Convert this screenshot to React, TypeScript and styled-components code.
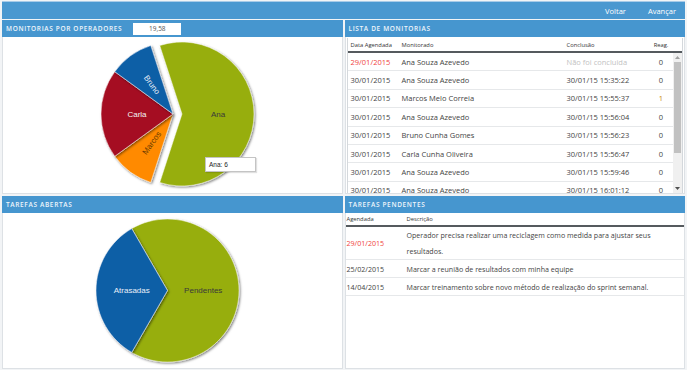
import React from "react";
import styled, { createGlobalStyle } from "styled-components";

const GlobalStyle = createGlobalStyle`
  html, body {
    margin: 0;
    padding: 0;
    background: #f2f4f6;
  }
  * {
    box-sizing: border-box;
  }
`;

const monitorias = [
  { agendada: "29/01/2015", late: true, nome: "Ana Souza Azevedo", conclusao: "Não foi concluida", pending: true, reag: 0 },
  { agendada: "30/01/2015", nome: "Ana Souza Azevedo", conclusao: "30/01/15 15:35:22", reag: 0 },
  { agendada: "30/01/2015", nome: "Marcos Melo Correia", conclusao: "30/01/15 15:55:37", reag: 1 },
  { agendada: "30/01/2015", nome: "Ana Souza Azevedo", conclusao: "30/01/15 15:56:04", reag: 0 },
  { agendada: "30/01/2015", nome: "Bruno Cunha Gomes", conclusao: "30/01/15 15:56:23", reag: 0 },
  { agendada: "30/01/2015", nome: "Carla Cunha Oliveira", conclusao: "30/01/15 15:56:47", reag: 0 },
  { agendada: "30/01/2015", nome: "Ana Souza Azevedo", conclusao: "30/01/15 15:59:46", reag: 0 },
  { agendada: "30/01/2015", nome: "Ana Souza Azevedo", conclusao: "30/01/15 16:01:12", reag: 0 },
];

const tarefas = [
  { agendada: "29/01/2015", late: true, descricao: "Operador precisa realizar uma reciclagem como medida para ajustar seus resultados." },
  { agendada: "25/02/2015", descricao: "Marcar a reunião de resultados com minha equipe" },
  { agendada: "14/04/2015", descricao: "Marcar treinamento sobre novo método de realização do sprint semanal." },
];

type Slice = {
  name: string;
  value: number;
  color: string;
  label: string;
  exploded?: boolean;
};

const operadores: Slice[] = [
  { name: "Ana", value: 6, color: "#97ae0b", label: "#3a3a3a", exploded: true },
  { name: "Marcos", value: 1, color: "#ff8a00", label: "#6a3a00" },
  { name: "Carla", value: 2, color: "#a50f22", label: "#f4f4f4" },
  { name: "Bruno", value: 1, color: "#115ea6", label: "#e8eef8" },
];

const abertas: Slice[] = [
  { name: "Pendentes", value: 2, color: "#97ae0b", label: "#3a3a3a" },
  { name: "Atrasadas", value: 1, color: "#115ea6", label: "#e8eef8" },
];

const Page = styled.div`
  width: 687px;
  height: 370px;
  padding: 1px 2px 0 2px;
  font-family: "Open Sans", "Liberation Sans", sans-serif;
  color: #444;
`;

const TopBar = styled.div`
  height: 18px;
  background: #4a98d0;
  border-top: 1px solid #a8cbe8;
  display: flex;
  justify-content: flex-end;
  align-items: center;
  gap: 22px;
  padding-right: 9px;
`;

const NavLink = styled.span`
  color: #fff;
  font-size: 7.5px;
`;

const Grid = styled.div`
  margin-top: 1px;
  display: grid;
  grid-template-columns: 1fr 1fr;
  grid-template-rows: 174px 173px;
  gap: 2px;
`;

const Panel = styled.div`
  display: flex;
  flex-direction: column;
  min-height: 0;
`;

const PanelHeader = styled.div`
  height: 17px;
  flex: none;
  background: #4696cf;
  display: flex;
  align-items: center;
  padding-left: 4px;
`;

const PanelTitle = styled.span`
  color: #eef5fb;
  font-size: 6.5px;
  font-weight: 600;
  letter-spacing: 0.65px;
  text-transform: uppercase;
`;

const ValueBox = styled.span`
  margin-left: 11px;
  width: 48px;
  height: 12px;
  background: #fff;
  color: #555;
  font-size: 6.5px;
  display: flex;
  align-items: center;
  justify-content: center;
`;

const PanelBody = styled.div<{ $pad?: boolean }>`
  flex: 1;
  min-height: 0;
  position: relative;
  background: #fff;
  border: 1px solid #dde1e5;
  border-top: none;
  padding: ${(p) => (p.$pad ? "1px 1px 0 1px" : "0")};
  display: flex;
  flex-direction: column;
`;

const ChartSvg = styled.svg`
  display: block;
  width: 100%;
  height: 100%;
`;

const Tooltip = styled.div`
  position: absolute;
  left: 202px;
  top: 120px;
  width: 51px;
  height: 15px;
  background: #fff;
  border: 1px solid #c4c4c4;
  box-shadow: 1px 1px 1px rgba(0, 0, 0, 0.12);
  font-family: "Liberation Sans", Arial, sans-serif;
  font-size: 6.5px;
  color: #222;
  display: flex;
  align-items: center;
  padding-left: 3px;
`;

const Table = styled.div`
  flex: 1;
  min-height: 0;
  display: flex;
  flex-direction: column;
  border-left: 1px solid #d4d8dc;
  border-right: 1px solid #d4d8dc;
`;

const HeadRow = styled.div<{ $cols: string; $padRight: number }>`
  display: grid;
  grid-template-columns: ${(p) => p.$cols};
  height: 15px;
  align-items: center;
  padding: 0 ${(p) => p.$padRight}px 0 3px;
  border-bottom: 2px solid #555a5e;
  font-size: 5.8px;
  color: #333;
  flex: none;
`;

const HeadCell = styled.span<{ $center?: boolean }>`
  text-align: ${(p) => (p.$center ? "center" : "left")};
`;

const ScrollArea = styled.div`
  flex: 1;
  min-height: 0;
  display: flex;
`;

const Rows = styled.div`
  flex: 1;
  overflow: hidden;
`;

const Row = styled.div<{ $cols: string }>`
  display: grid;
  grid-template-columns: ${(p) => p.$cols};
  height: 18.4px;
  align-items: center;
  padding: 0 2px 0 3px;
  border-bottom: 1px solid #e6e8ea;
  font-size: 7.5px;
  color: #444;
`;

const Cell = styled.span<{ $tone?: "late" | "muted" | "warn"; $center?: boolean }>`
  white-space: nowrap;
  text-align: ${(p) => (p.$center ? "center" : "left")};
  color: ${(p) =>
    p.$tone === "late" ? "#f0433c" : p.$tone === "muted" ? "#c2c2c2" : p.$tone === "warn" ? "#c8870e" : "#444"};
`;

const ScrollBar = styled.div`
  width: 9px;
  flex: none;
  background: #f0f0f0;
  display: flex;
  flex-direction: column;
`;

const ScrollButton = styled.div`
  height: 9px;
  display: flex;
  align-items: center;
  justify-content: center;
`;

const ScrollTrack = styled.div`
  flex: 1;
  padding: 0 1px;
`;

const ScrollThumb = styled.div`
  height: 91px;
  background: #c1c1c1;
`;

const TaskRow = styled.div`
  display: grid;
  grid-template-columns: 60px 1fr;
  align-items: center;
  padding: 0 4px 0 1px;
  border-bottom: 1px solid #e6e8ea;
  font-size: 7.1px;
  line-height: 16px;
  min-height: 18px;
  color: #444;
`;

const TaskHead = styled.div`
  display: grid;
  grid-template-columns: 60px 1fr;
  height: 14px;
  align-items: center;
  padding-left: 1px;
  border-bottom: 2px solid #555a5e;
  font-size: 5.8px;
  color: #333;
`;

const point = (cx: number, cy: number, r: number, a: number) => {
  const rad = (a * Math.PI) / 180;
  return [cx + r * Math.sin(rad), cy - r * Math.cos(rad)];
};

const slicePath = (cx: number, cy: number, r: number, a0: number, a1: number) => {
  const [x0, y0] = point(cx, cy, r, a0);
  const [x1, y1] = point(cx, cy, r, a1);
  const large = a1 - a0 > 180 ? 1 : 0;
  return `M${cx} ${cy} L${x0} ${y0} A${r} ${r} 0 ${large} 1 ${x1} ${y1} Z`;
};

const PieChart = ({
  id,
  slices,
  cx,
  cy,
  r,
  start,
  rotateLabels,
}: {
  id: string;
  slices: Slice[];
  cx: number;
  cy: number;
  r: number;
  start: number;
  rotateLabels?: boolean;
}) => {
  const total = slices.reduce((s, x) => s + x.value, 0);
  let angle = start;
  const parts = slices.map((s) => {
    const a0 = angle;
    const a1 = angle + (s.value / total) * 360;
    angle = a1;
    const mid = (a0 + a1) / 2;
    const [ox, oy] = s.exploded ? point(0, 0, 9, mid) : [0, 0];
    return { ...s, a0, a1, mid, ox, oy };
  });

  return (
    <ChartSvg>
      <defs>
        <filter id={id} x="-10%" y="-10%" width="125%" height="125%">
          <feDropShadow dx="1.2" dy="1.2" stdDeviation="0.9" floodColor="#000" floodOpacity="0.5" />
        </filter>
      </defs>
      {parts.map((p) => (
        <path
          key={p.name}
          d={slicePath(cx + p.ox, cy + p.oy, r, p.a0, p.a1)}
          fill={p.color}
          stroke="#fff"
          strokeWidth={0.5}
          filter={`url(#${id})`}
        />
      ))}
      {parts.map((p) => {
        const [lx, ly] = point(cx + p.ox, cy + p.oy, r / 2, p.mid);
        // labels on the left half read along the radius, towards the centre
        const rot = rotateLabels && p.mid > 180 ? p.mid - 270 : 0;
        return (
          <text
            key={p.name}
            x={lx}
            y={ly}
            fill={p.label}
            fontFamily="'Liberation Sans', Arial, sans-serif"
            fontSize={8}
            textAnchor="middle"
            dominantBaseline="central"
            transform={rot ? `rotate(${rot} ${lx} ${ly})` : undefined}
          >
            {p.name}
          </text>
        );
      })}
    </ChartSvg>
  );
};

const monitoriaCols = "51px 165px 1fr 20px";

const App = () => {
  return (
    <Page>
      <GlobalStyle />
      <TopBar>
        <NavLink>Voltar</NavLink>
        <NavLink>Avançar</NavLink>
      </TopBar>

      <Grid>
        <Panel>
          <PanelHeader>
            <PanelTitle>Monitorias por operadores</PanelTitle>
            <ValueBox>19,58</ValueBox>
          </PanelHeader>
          <PanelBody>
            <PieChart id="shadow-op" slices={operadores} cx={170} cy={77} r={72} start={-18} rotateLabels />
            <Tooltip>Ana: 6</Tooltip>
          </PanelBody>
        </Panel>

        <Panel>
          <PanelHeader>
            <PanelTitle>Lista de monitorias</PanelTitle>
          </PanelHeader>
          <PanelBody $pad>
            <Table>
              <HeadRow $cols={monitoriaCols} $padRight={11}>
                <HeadCell>Data Agendada</HeadCell>
                <HeadCell>Monitorado</HeadCell>
                <HeadCell>Conclusão</HeadCell>
                <HeadCell $center>Reag.</HeadCell>
              </HeadRow>
              <ScrollArea>
                <Rows>
                  {monitorias.map((m, index) => (
                    <Row key={index} $cols={monitoriaCols}>
                      <Cell $tone={m.late ? "late" : undefined}>{m.agendada}</Cell>
                      <Cell>{m.nome}</Cell>
                      <Cell $tone={m.pending ? "muted" : undefined}>{m.conclusao}</Cell>
                      <Cell $center $tone={m.reag > 0 ? "warn" : undefined}>
                        {m.reag}
                      </Cell>
                    </Row>
                  ))}
                </Rows>
                <ScrollBar>
                  <ScrollButton>
                    <svg width="5" height="3" viewBox="0 0 5 3">
                      <path d="M0 3 L2.5 0 L5 3 Z" fill="#a0a0a0" />
                    </svg>
                  </ScrollButton>
                  <ScrollTrack>
                    <ScrollThumb />
                  </ScrollTrack>
                  <ScrollButton>
                    <svg width="5" height="3" viewBox="0 0 5 3">
                      <path d="M0 0 L5 0 L2.5 3 Z" fill="#505050" />
                    </svg>
                  </ScrollButton>
                </ScrollBar>
              </ScrollArea>
            </Table>
          </PanelBody>
        </Panel>

        <Panel>
          <PanelHeader>
            <PanelTitle>Tarefas abertas</PanelTitle>
          </PanelHeader>
          <PanelBody>
            <PieChart id="shadow-ab" slices={abertas} cx={164.5} cy={77.5} r={71.5} start={-30} />
          </PanelBody>
        </Panel>

        <Panel>
          <PanelHeader>
            <PanelTitle>Tarefas pendentes</PanelTitle>
          </PanelHeader>
          <PanelBody>
            <TaskHead>
              <HeadCell>Agendada</HeadCell>
              <HeadCell>Descrição</HeadCell>
            </TaskHead>
            {tarefas.map((t, index) => (
              <TaskRow key={index}>
                <Cell $tone={t.late ? "late" : undefined}>{t.agendada}</Cell>
                <span>{t.descricao}</span>
              </TaskRow>
            ))}
          </PanelBody>
        </Panel>
      </Grid>
    </Page>
  );
};

export default App;
